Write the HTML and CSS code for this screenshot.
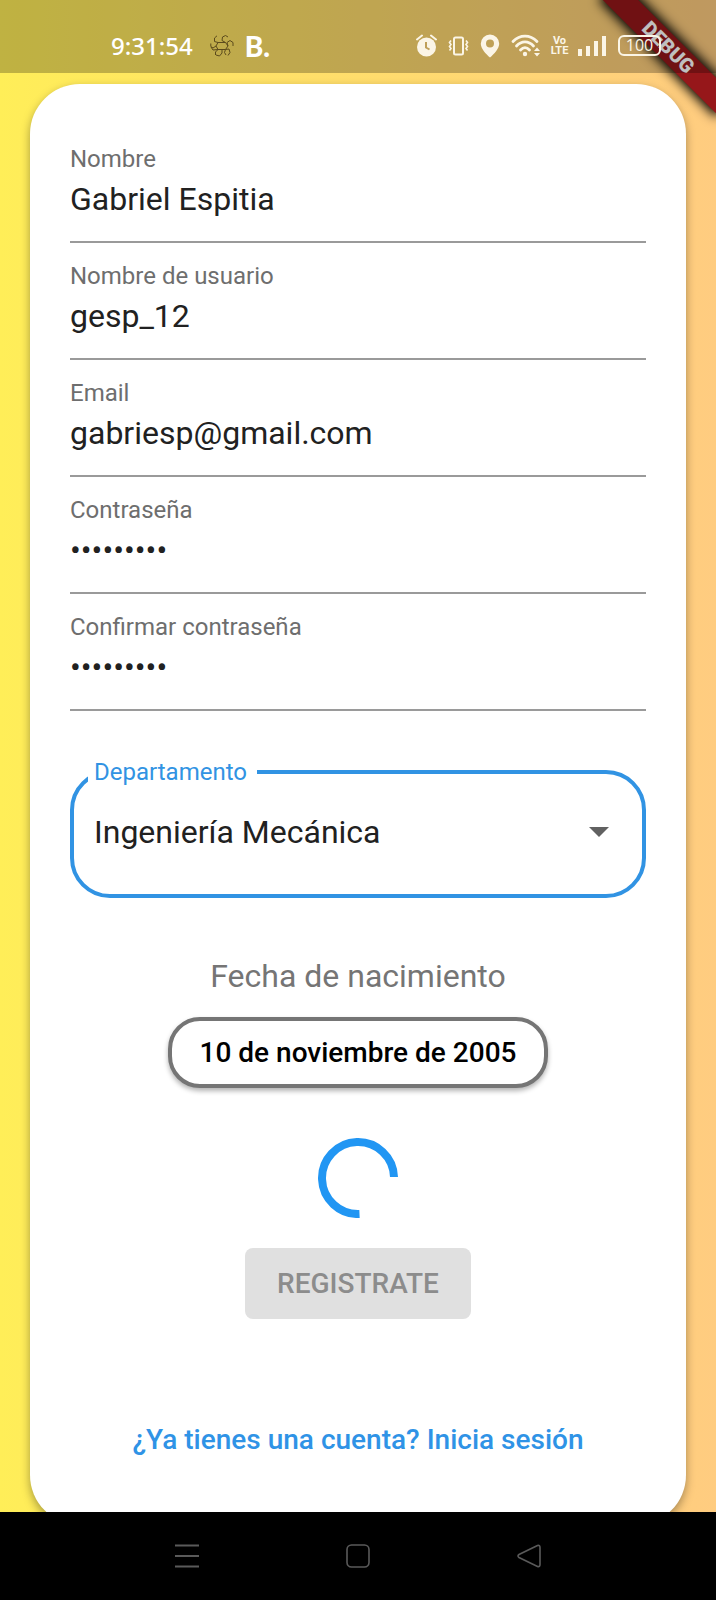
FILE: index.html
```html
<!DOCTYPE html>
<html lang="es">
<head>
<meta charset="utf-8">
<meta name="viewport" content="width=device-width, initial-scale=1">
<title>Registro</title>
<link rel="stylesheet" href="styles.css">
</head>
<body class="screen">
  <header class="status">
    <div class="status-group">
      <span class="clock">9:31:54</span>
      <svg width="24" height="22" viewBox="0 0 24 22" fill="none" stroke="#5b4a1c" stroke-width="1" aria-hidden="true">
        <path d="M8 7.500H15.500L18 11 15.500 14.500H8L6 11ZM8 7.500 4.500 6.500V3L7 .800M15.500 7.500 12 5.500 12.500 2 15.500 .500 18 2M18 11 17 7.500 20 5.500 23 7.500V11M15.500 14.500 19 14 20 17.500 18 20.500M12 14.500V18L9.500 21 6 20M8 14.500 5.500 17V20M6 11 3 13 .800 11.500V8.500M8 14.500 3 15 1 12M15.500 14.500 14.500 17.500 16 20"/>
      </svg>
      <span class="brand">B.</span>
    </div>
    <div class="status-group">
      <svg width="21" height="23" viewBox="0 0 21 23" aria-hidden="true">
        <circle cx="10.500" cy="13" r="9.500" fill="#fbf5e6"/>
        <path d="M1 5.500 6 1.500M20 5.500 15 1.500" stroke="#fbf5e6" stroke-width="2" stroke-linecap="round"/>
        <path d="M10 8V13.500L13.500 15.500" fill="none" stroke="#bf9f59" stroke-width="2"/>
      </svg>
      <svg width="21" height="20" viewBox="0 0 21 20" fill="none" stroke="#fbf5e6" aria-hidden="true">
        <rect x="6" y="1.500" width="9" height="17" rx="1.500" stroke-width="2"/>
        <path d="M3 4.500 1.500 6.500 3 8.500 1.500 10.500 3 12.500 1.500 14.500M18 4.500 19.500 6.500 18 8.500 19.500 10.500 18 12.500 19.500 14.500" stroke-width="1.600"/>
      </svg>
      <svg width="20" height="24" viewBox="0 0 19 24" aria-hidden="true">
        <path fill="#fbf5e6" fill-rule="evenodd" d="M9.500 0.500A9.200 9.200 0 0 1 18.700 9.700C18.700 14.500 13.500 20 9.500 23.500 5.500 20 .3 14.500.3 9.700A9.200 9.200 0 0 1 9.500.5ZM9.500 5.500A4 4 0 1 0 9.500 13.500 4 4 0 0 0 9.500 5.500Z"/>
      </svg>
      <svg width="30" height="23" viewBox="0 0 30 23" fill="none" stroke="#fbf5e6" aria-hidden="true">
        <path d="M2 7.500C9 .200 19 .200 26 7.500M5.500 12C10.500 6.500 17.500 6.500 22.500 12M9.500 16C12.500 12.800 15.500 12.800 18.500 16" stroke-width="2.800" stroke-linecap="round"/>
        <circle cx="14" cy="20" r="2.200" fill="#fbf5e6" stroke="none"/>
        <path d="M23 17 26 13.500 29 17ZM23 19 26 22.500 29 19Z" fill="#fbf5e6" stroke="none"/>
      </svg>
      <span class="volte"><span>Vo</span><span>LTE</span></span>
      <svg width="29" height="21" viewBox="0 0 29 21" fill="#fbf5e6" aria-hidden="true">
        <rect x="0" y="14" width="4" height="7"/><rect x="8" y="11" width="4" height="10"/><rect x="16" y="6" width="4" height="15"/><rect x="24" y="1" width="4" height="20"/>
      </svg>
      <span class="battery">100</span>
    </div>
  </header>

  <div class="banner" aria-hidden="true"><span class="banner-band">DEBUG</span></div>

  <main class="content">
    <form class="card">
      <div class="field">
        <label for="nombre">Nombre</label>
        <input id="nombre" type="text" value="Gabriel Espitia">
      </div>
      <div class="field">
        <label for="usuario">Nombre de usuario</label>
        <input id="usuario" type="text" value="gesp_12">
      </div>
      <div class="field">
        <label for="email">Email</label>
        <input id="email" type="email" value="gabriesp@gmail.com">
      </div>
      <div class="field">
        <label for="clave">Contraseña</label>
        <input id="clave" type="password" value="abcdefghi">
      </div>
      <div class="field">
        <label for="confirmar">Confirmar contraseña</label>
        <input id="confirmar" type="password" value="abcdefghi">
      </div>

      <fieldset class="picker">
        <legend><label for="departamento">Departamento</label></legend>
        <div class="picker-body">
          <select id="departamento"><option>Ingeniería Mecánica</option></select>
          <svg class="picker-arrow" width="20" height="10" viewBox="0 0 20 10" aria-hidden="true"><path d="M0 0H20L10 10Z" fill="#616161"/></svg>
        </div>
      </fieldset>

      <label class="date-label" for="fecha">Fecha de nacimiento</label>
      <button class="date-button" id="fecha" type="button">10 de noviembre de 2005</button>

      <svg class="spinner" width="80" height="80" viewBox="0 0 80 80" role="img" aria-label="Cargando">
        <path d="M41.500 76A36 36 0 1 1 76 39" fill="none" stroke="#2196f3" stroke-width="8"/>
      </svg>

      <button class="submit" type="submit" disabled>REGISTRATE</button>
      <a class="login" href="#">¿Ya tienes una cuenta? Inicia sesión</a>
    </form>
  </main>

  <nav class="navbar" aria-label="Sistema">
    <button type="button" aria-label="Recientes">
      <svg width="24" height="24" viewBox="0 0 24 24" stroke="#5a5a5a" stroke-width="2"><path d="M0 1.500H24M0 12H24M0 22.500H24"/></svg>
    </button>
    <button type="button" aria-label="Inicio">
      <svg width="24" height="24" viewBox="0 0 24 24" fill="none" stroke="#5a5a5a" stroke-width="1.600"><rect x="1" y="1" width="22" height="22" rx="4.500"/></svg>
    </button>
    <button type="button" aria-label="Atrás">
      <svg width="24" height="24" viewBox="0 0 24 24" fill="none" stroke="#5a5a5a" stroke-width="1.600"><path d="M20.500 1.500 2 10.500Q0 12 2 13.500L20.500 22.500Q23 23.200 23 20.500V3.500Q23 .800 20.500 1.500Z"/></svg>
    </button>
  </nav>
</body>
</html>
```
FILE: styles.css
```css
* {
  box-sizing: border-box;
}

.screen {
  position: relative;
  display: flex;
  flex-direction: column;
  height: 100vh;
  margin: 0;
  overflow: hidden;
  background: linear-gradient(to right, #ffee58, #ffcc80);
  font-family: Roboto, "Noto Sans", sans-serif;
  color: #212121;
}

button,
input,
select {
  font-family: inherit;
}

svg {
  display: block;
  flex: none;
}

/* Status bar */
.status {
  position: relative;
  z-index: 2;
  display: flex;
  flex: none;
  align-items: center;
  justify-content: space-between;
  height: 73px;
  padding: 18px 55px 0 111px;
  background: rgba(0, 0, 0, 0.25);
  color: #fbf5e6;
}

.status-group {
  display: flex;
  align-items: center;
  gap: 11px;
}

.clock {
  margin-right: 6px;
  font-family: "Noto Sans", sans-serif;
  font-size: 24px;
  line-height: 28px;
  font-weight: 500;
  color: #fff;
}

.brand {
  font-family: Lato, sans-serif;
  font-size: 28px;
  line-height: 28px;
  font-weight: 900;
  color: #fff;
}

.volte {
  display: flex;
  flex-direction: column;
  align-items: center;
  width: 15px;
  font-size: 11px;
  line-height: 10px;
  font-weight: 700;
}

.battery {
  width: 43px;
  height: 21px;
  border: 2px solid #fbf5e6;
  border-radius: 6px;
  font-family: "Open Sans", sans-serif;
  font-size: 16px;
  line-height: 17px;
  text-align: center;
}

/* Corner ribbon */
.banner {
  position: absolute;
  z-index: 1;
  top: 0;
  right: 0;
  width: 160px;
  height: 160px;
  overflow: hidden;
  pointer-events: none;
}

.banner-band {
  position: absolute;
  top: 35px;
  right: -32px;
  width: 160px;
  height: 25px;
  background: #96171a;
  box-shadow: 0 0 12px 3px #000;
  color: #fff;
  font-size: 20px;
  line-height: 25px;
  font-weight: 900;
  text-align: center;
  transform: rotate(45deg);
}

/* Form card */
.content {
  flex: 1;
  min-height: 0;
  padding: 11px 30px;
  overflow-y: auto;
  scrollbar-width: none;
}

.card {
  display: flex;
  flex-direction: column;
  align-items: center;
  padding: 42px 40px 67px;
  border-radius: 50px;
  background: #fff;
  box-shadow: 0 4px 10px rgba(0, 0, 0, 0.35);
}

.field {
  display: flex;
  flex-direction: column;
  gap: 6px;
  width: 100%;
  padding: 19px 0 22px;
  border-bottom: 2px solid #9a9a9a;
}

.field label {
  font-size: 24px;
  line-height: 28px;
  color: #6e6e6e;
}

.field input {
  width: 100%;
  height: 40px;
  padding: 0;
  border: 0;
  outline: 0;
  background: none;
  font-size: 32px;
  line-height: 40px;
  color: #212121;
}

.picker {
  width: 100%;
  min-width: 0;
  margin: 47px 0 0;
  padding: 0;
  border: 4px solid #3193e3;
  border-radius: 40px;
}

.picker legend {
  margin-left: 14px;
  padding: 0 10px 0 6px;
  font-size: 24px;
  line-height: 28px;
  color: #3193e3;
}

.picker-body {
  display: grid;
  align-items: center;
  padding-bottom: 16px;
}

.picker select {
  grid-area: 1 / 1;
  width: 100%;
  height: 92px;
  padding: 0 60px 0 20px;
  border: 0;
  outline: 0;
  background: none;
  appearance: none;
  font-size: 32px;
  color: #212121;
}

.picker-arrow {
  grid-area: 1 / 1;
  justify-self: end;
  margin-right: 33px;
  pointer-events: none;
}

.date-label {
  margin-top: 58px;
  font-size: 32px;
  line-height: 40px;
  color: #757575;
}

.date-button {
  height: 71px;
  margin-top: 21px;
  padding: 0 28px;
  border: 4px solid #757575;
  border-radius: 32px;
  background: #fff;
  box-shadow: 0 3px 5px rgba(0, 0, 0, 0.3);
  font-size: 28px;
  font-weight: 500;
  color: #000;
}

.spinner {
  margin-top: 50px;
}

.submit {
  height: 71px;
  margin-top: 30px;
  padding: 0 32px;
  border: 0;
  border-radius: 8px;
  background: #e0e0e0;
  font-size: 28px;
  font-weight: 500;
  color: #8c8c8c;
}

.login {
  margin-top: 103px;
  font-size: 28px;
  line-height: 36px;
  font-weight: 500;
  color: #2f93e6;
  text-decoration: none;
}

/* System navigation */
.navbar {
  position: relative;
  display: flex;
  flex: none;
  align-items: center;
  justify-content: center;
  gap: 147px;
  height: 88px;
  background: #000;
}

.navbar button {
  padding: 0;
  border: 0;
  background: none;
}
```
